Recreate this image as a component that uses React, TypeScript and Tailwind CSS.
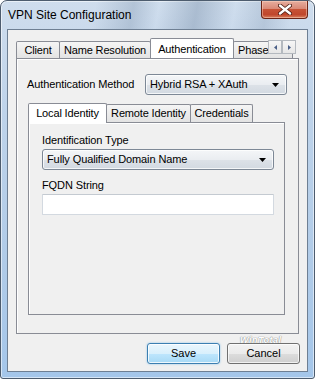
import type { ReactNode } from 'react';

function cx(...c: (string | false | undefined)[]) {
  return c.filter(Boolean).join(' ');
}

const tabBase =
  'flex items-center justify-center border-t border-l border-r border-[#898c95] text-[11px] tracking-[-0.15px] whitespace-nowrap rounded-t-[2px]';
const tabOff = 'bg-[linear-gradient(180deg,#f5f5f5_0%,#ececec_50%,#e3e3e3_100%)]';
const tabOn = 'bg-white relative z-10 -mb-px';

function Tab({ label, active, className }: { label: string; active?: boolean; className?: string }) {
  return <div className={cx(tabBase, active ? tabOn : tabOff, className)}>{label}</div>;
}

function DropArrow() {
  return (
    <svg width="7" height="4" viewBox="0 0 7 4">
      <path d="M0 0h7L3.5 4z" fill="#000" />
    </svg>
  );
}

function Combo({ value, className }: { value: string; className?: string }) {
  return (
    <div
      className={cx(
        'h-[21px] flex items-center justify-between pl-[4px] pr-[7px] rounded-[3px] border border-[#7d8896] text-[11px] tracking-[-0.1px]',
        'bg-[linear-gradient(180deg,#f4f6f8_0%,#eaedf1_50%,#dde2e8_51%,#d2d9e1_100%)] shadow-[inset_0_0_0_1px_rgba(255,255,255,0.75)]',
        className
      )}
    >
      <span>{value}</span>
      <DropArrow />
    </div>
  );
}

function ScrollBtn({ dir }: { dir: 'l' | 'r' }) {
  return (
    <div className="w-[14px] h-[14px] flex items-center justify-center border border-[#b4b9bf] bg-[linear-gradient(180deg,#f6f6f6_0%,#e6e6e6_100%)]">
      <svg width="3" height="5" viewBox="0 0 3 5">
        <path d={dir === 'l' ? 'M3 0v5L0 2.5z' : 'M0 0v5l3-2.5z'} fill="#4a5f87" />
      </svg>
    </div>
  );
}

function Button({ children, primary }: { children: ReactNode; primary?: boolean }) {
  return (
    <div
      className={cx(
        'w-[73px] h-[21px] flex items-center justify-center rounded-[3px] border text-[11px]',
        primary
          ? 'border-[#3c7fb1] bg-[linear-gradient(180deg,#eaf6fd_0%,#d9f0fc_50%,#bee6fd_51%,#a7d9f5_100%)] shadow-[inset_0_0_0_1px_rgba(255,255,255,0.8),0_0_2px_rgba(60,160,230,0.6)]'
          : 'border-[#707070] bg-[linear-gradient(180deg,#f2f2f2_0%,#ebebeb_50%,#dddddd_51%,#cfcfcf_100%)] shadow-[inset_0_0_0_1px_rgba(255,255,255,0.7)]'
      )}
    >
      {children}
    </div>
  );
}

function CloseButton() {
  return (
    <div className="absolute top-0 right-[6px] w-[47px] h-[18px] rounded-b-[4px] border border-t-0 border-[#6b2416] bg-[linear-gradient(180deg,#e6ad9e_0%,#d98a77_45%,#c75235_50%,#c0472c_80%,#d9805f_100%)] shadow-[inset_0_0_0_1px_rgba(255,220,200,0.45)] flex items-center justify-center">
      <svg width="14" height="11" viewBox="0 0 14 11">
        <path d="M2 1.5l10 8M12 1.5l-10 8" stroke="#4a1a10" strokeWidth="4" strokeLinecap="round" />
        <path d="M2 1.5l10 8M12 1.5l-10 8" stroke="#ffffff" strokeWidth="2.4" strokeLinecap="round" />
      </svg>
    </div>
  );
}

export default function App() {
  return (
    <div className="w-[315px] h-[379px] bg-white font-['Liberation_Sans',Arial,sans-serif] text-black">
      <div className="relative w-full h-full flex flex-col rounded-t-[7px] rounded-b-[3px] border border-[#4d5c6e] bg-[linear-gradient(180deg,#cfdded_0%,#bed3ea_30%,#b0cbe8_70%,#a4c6ea_100%)] shadow-[inset_0_0_0_1px_rgba(255,255,255,0.55)] overflow-hidden">
        {/* Title bar */}
        <div className="relative h-[28px] flex items-center pl-[7px] text-[12px] bg-[linear-gradient(100deg,transparent_30%,rgba(80,105,135,0.22)_42%,transparent_50%,rgba(80,105,135,0.28)_62%,transparent_74%,rgba(80,105,135,0.18)_84%,transparent_92%)]">
          VPN Site Configuration
        </div>
        <CloseButton />

        {/* Client area */}
        <div className="flex-1 flex px-[6px] pb-[6px]">
          <div className="relative flex-1 flex flex-col border border-[#6e7f93] bg-[#f0f0f0]">
            {/* Outer tab control */}
            <div className="relative mt-[8px] ml-[8px] w-[283px] flex flex-col">
              <div className="h-[20px] flex items-end overflow-hidden">
                <Tab label="Client" className="w-[44px] h-[17px]" />
                <Tab label="Name Resolution" className="w-[92px] h-[17px] -ml-px" />
                <Tab label="Authentication" active className="w-[84px] h-[21px] -ml-px" />
                <Tab label="Phase 1" className="w-[60px] h-[17px] -ml-px !justify-start pl-[4px] shrink-0" />
              </div>
              <div className="absolute left-[252px] top-[2px] flex">
                <ScrollBtn dir="l" />
                <ScrollBtn dir="r" />
              </div>

              {/* Authentication page */}
              <div className="h-[276px] border border-[#898c95] bg-[#f0f0f0] shadow-[inset_1px_1px_0_#ffffff] flex flex-col">
                <div className="mt-[15px] flex items-center pl-[10px] pr-[11px] justify-between">
                  <span className="text-[11px] tracking-[-0.1px]">Authentication Method</span>
                  <Combo value="Hybrid RSA + XAuth" className="w-[142px]" />
                </div>

                {/* Inner tab control */}
                <div className="mt-[8px] ml-[11px] w-[257px] flex flex-col">
                  <div className="h-[19px] flex items-end">
                    <Tab label="Local Identity" active className="w-[79px] h-[20px]" />
                    <Tab label="Remote Identity" className="w-[85px] h-[18px] -ml-px" />
                    <Tab label="Credentials" className="w-[63px] h-[18px] -ml-px" />
                  </div>
                  <div className="h-[193px] border border-[#898c95] bg-[#f0f0f0] shadow-[inset_1px_1px_0_#ffffff] flex flex-col pl-[13px] pr-[10px] pt-[11px]">
                    <div className="h-[13px] leading-[13px] text-[11px] tracking-[-0.1px]">Identification Type</div>
                    <Combo value="Fully Qualified Domain Name" className="mt-[2px]" />
                    <div className="mt-[9px] h-[13px] leading-[13px] text-[11px] tracking-[-0.1px]">FQDN String</div>
                    <div className="mt-[2px] h-[21px] border border-[#d3d9e0] border-t-[#c4cad1] rounded-[1px] bg-white" />
                  </div>
                </div>
              </div>
            </div>

            {/* Bottom buttons */}
            <div className="mt-[9px] flex justify-end gap-[7px] pr-[7px]">
              <Button primary>Save</Button>
              <Button>Cancel</Button>
            </div>

            <div className="absolute left-[232px] top-[304px] text-[9px] italic font-bold tracking-[0.5px] text-white [text-shadow:0_0_1px_#8a8a8a,0_0_1px_#8a8a8a]">
              WinTotal
            </div>
          </div>
        </div>
      </div>
    </div>
  );
}
